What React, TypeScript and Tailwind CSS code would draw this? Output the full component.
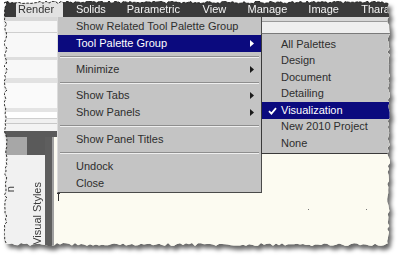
import React from "react";

const W = 386;
const H = 245;

function rnd(i: number) {
  const s = Math.sin(i * 127.1 + 311.7) * 43758.5453;
  return s - Math.floor(s);
}

function buildEdges() {
  let k = 0;
  const top: [number, number][] = [];
  for (let x = 0; x <= W; x += 3) top.push([x, rnd(k++) * 2.5]);
  const right: [number, number][] = [];
  for (let y = 3; y <= H; y += 3) right.push([W - rnd(k++) * 3, y]);
  const bottom: [number, number][] = [];
  for (let x = W - 3; x >= 0; x -= 3) bottom.push([x, H - rnd(k++) * 3]);
  const left: [number, number][] = [];
  for (let y = H - 3; y > 0; y -= 3) left.push([rnd(k++) * 3, y]);
  return { top, right, bottom, left };
}

const edges = buildEdges();
const all = [...edges.top, ...edges.right, ...edges.bottom, ...edges.left];
const clip = `polygon(${all.map(([x, y]) => `${x.toFixed(1)}px ${y.toFixed(1)}px`).join(",")})`;
const strokePts = [...edges.left, ...edges.top].map(([x, y]) => `${x.toFixed(1)},${y.toFixed(1)}`).join(" ");

function Arrow({ white }: { white?: boolean }) {
  return (
    <svg width="4" height="7" viewBox="0 0 4 7" className="block">
      <polygon points="0,0 4,3.5 0,7" fill={white ? "#ffffff" : "#1a1a1a"} />
    </svg>
  );
}

function Item({ label, arrow, active }: { label: string; arrow?: boolean; active?: boolean }) {
  return (
    <div
      className={
        "flex h-[17px] items-center justify-between pl-[18px] pr-[7px] " +
        (active ? "bg-[#0b0a7e] text-white" : "text-[#2e2e2e]")
      }
    >
      <span>{label}</span>
      {arrow && <Arrow white={active} />}
    </div>
  );
}

function Sep({ h }: { h: string }) {
  return (
    <div className={"flex items-center px-[2px] " + h}>
      <div className="h-[2px] w-full border-t border-b border-t-[#8e8e8e] border-b-[#efefef]" />
    </div>
  );
}

function SubItem({ label, active }: { label: string; active?: boolean }) {
  return (
    <div
      className={
        "relative flex h-[16.5px] items-center pl-[19px] " +
        (active ? "bg-[#0b0a7e] text-white" : "text-[#2e2e2e]")
      }
    >
      {active && (
        <svg width="9" height="8" viewBox="0 0 9 8" className="absolute left-[6px] top-[4.5px]">
          <path d="M1 4.2 L3.4 6.6 L8 1.2" fill="none" stroke="#ffffff" strokeWidth="1.8" />
        </svg>
      )}
      <span>{label}</span>
    </div>
  );
}

export default function App() {
  return (
    <div className="h-[260px] w-[400px] overflow-hidden bg-white pl-[4px] pt-[1px] font-['Liberation_Sans',Arial,sans-serif] text-[11px] leading-none">
      <div className="relative h-[245px] w-[386px] drop-shadow-[3px_4px_2px_rgba(0,0,0,0.6)]">
        <div className="relative flex h-full w-full flex-col overflow-hidden bg-[#fcfbf1]" style={{ clipPath: clip }}>
          {/* menu bar */}
          <div className="flex h-[16px] shrink-0 items-stretch bg-[#3a3a3a] pl-[12px] text-[#f4f4f4]">
            <div className="flex w-[47px] items-center bg-[#e2e2e2] pl-[2px] text-[#333333]">Render</div>
            <span className="ml-[13px] flex w-[51px] items-center">Solids</span>
            <span className="flex w-[76px] items-center">Parametric</span>
            <span className="flex w-[45px] items-center">View</span>
            <span className="flex w-[61px] items-center">Manage</span>
            <span className="flex w-[53px] items-center">Image</span>
            <span className="flex items-center">Thara</span>
          </div>

          {/* upper area */}
          <div className="flex h-[114px] shrink-0">
            <div className="flex w-[53px] flex-col">
              <div className="h-[4px] bg-[#d8d8d8]" />
              <div className="h-[12px] border-b border-[#cfcfcf] bg-[#f6f6f6]" />
              <div className="h-[24px] bg-[#f8f8f8]" />
              <div className="h-[3px] bg-[#dedede]" />
              <div className="h-[18px] bg-[#f8f8f8]" />
              <div className="h-[5px] bg-[#e2e2e2]" />
              <div className="h-[25px] bg-[#fafafa]" />
              <div className="h-[4px] bg-[#e4e4e4]" />
              <div className="h-[6px] bg-white" />
              <div className="h-[1px] bg-[#cfcfcf]" />
              <div className="h-[4px] bg-[#f0f0f0]" />
              <div className="h-[1px] bg-[#c8c8c8]" />
              <div className="flex-1 bg-[#f3f3f3]" />
            </div>
            <div className="flex flex-1 flex-col">
              <div className="h-[4px] bg-[#d6d6d6]" />
              <div className="h-[12px] border-t border-[#9a9a9a] bg-[#efefef]" />
              <div className="flex-1 bg-[#fcfbf1]" />
            </div>
          </div>

          {/* lower area */}
          <div className="flex min-h-0 flex-1">
            <div className="flex min-h-0 w-[53px] flex-col">
              <div className="h-[6px] shrink-0 bg-[#5a5a5a]" />
              <div className="flex min-h-0 flex-1">
                <div className="flex min-h-0 w-[41px] flex-col">
                  <div className="flex h-[18px] shrink-0">
                    <div className="w-[23px] bg-[#a7a7a7]" />
                    <div className="flex-1 bg-[#5a5a5a]" />
                  </div>
                  <div className="flex min-h-0 flex-1 overflow-hidden bg-[#f1f1f1] text-[#3a3a3a]">
                    <span className="mt-[31px] w-[13px] rotate-180 self-start whitespace-nowrap leading-[13px] [writing-mode:vertical-rl]">
                      n
                    </span>
                    <span className="mb-[1px] ml-auto mr-[1px] w-[13px] rotate-180 self-end whitespace-nowrap text-[11px] leading-[13px] [writing-mode:vertical-rl]">
                      Visual Styles
                    </span>
                  </div>
                </div>
                <div className="w-[7px] bg-[#5e5e5e]" />
                <div className="w-[2px] bg-[#a0a0a0]" />
                <div className="flex-1 bg-[#fcfbf1]" />
              </div>
            </div>
            <div className="relative flex-1 bg-[#fcfbf1]">
              <div className="absolute left-[1px] top-[62px] h-[8px] w-[1px] bg-[#333]" />
              <div className="absolute left-0 top-[62px] h-[1px] w-[3px] bg-[#333]" />
              <div className="absolute left-[251px] top-[78px] h-[1px] w-[1px] bg-[#777]" />
              <div className="absolute left-[309px] top-[78px] h-[1px] w-[1px] bg-[#777]" />
            </div>
          </div>

          {/* dropdown */}
          <div className="absolute left-[53px] top-[16px] flex h-[176px] w-[205px] flex-col border-b border-l border-r border-b-[#4a4a4a] border-l-[#dcdcdc] border-r-[#4a4a4a] bg-[#c4c4c4] pt-[1px]">
            <Item label="Show Related Tool Palette Group" />
            <Item label="Tool Palette Group" arrow active />
            <Sep h="h-[9px]" />
            <Item label="Minimize" arrow />
            <Sep h="h-[9px]" />
            <Item label="Show Tabs" arrow />
            <Item label="Show Panels" arrow />
            <Sep h="h-[10px]" />
            <Item label="Show Panel Titles" />
            <Sep h="h-[10px]" />
            <Item label="Undock" />
            <Item label="Close" />
          </div>

          {/* submenu */}
          <div className="absolute left-[257px] top-[32px] flex h-[121px] w-[130px] flex-col border-b border-l border-t border-b-[#3a3a3a] border-l-[#3a3a3a] border-t-[#7a7a7a] bg-[#c4c4c4] pt-[2px]">
            <SubItem label="All Palettes" />
            <SubItem label="Design" />
            <SubItem label="Document" />
            <SubItem label="Detailing" />
            <SubItem label="Visualization" active />
            <SubItem label="New 2010 Project" />
            <SubItem label="None" />
          </div>
        </div>
        <svg className="pointer-events-none absolute inset-0" width={W} height={H}>
          <polyline points={strokePts} fill="none" stroke="#1c1c1c" strokeWidth="0.9" strokeDasharray="2.5 1.5" />
        </svg>
      </div>
    </div>
  );
}
